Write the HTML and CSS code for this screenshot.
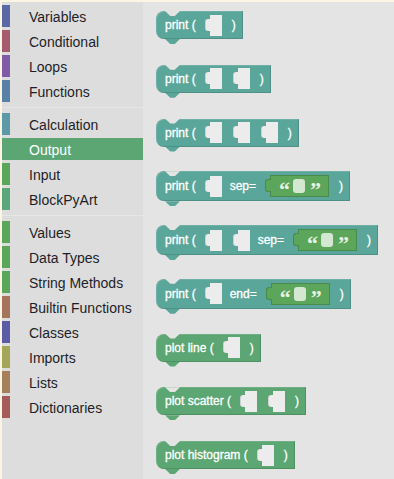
FILE: index.html
```html
<!DOCTYPE html>
<html lang="en">
<head>
  <meta charset="UTF-8" />
  <title>BlockPy - Output</title>
  <link rel="stylesheet" href="styles.css">
</head>
<body>

  <div class="frame">

    <div class="toolbox">
      <div class="row cat-variables">Variables</div>
      <div class="row cat-conditional">Conditional</div>
      <div class="row cat-loops">Loops</div>
      <div class="row cat-functions">Functions</div>
      <div class="separator"></div>
      <div class="row cat-calculation">Calculation</div>
      <div class="row cat-output selected">Output</div>
      <div class="row cat-input">Input</div>
      <div class="row cat-art">BlockPyArt</div>
      <div class="separator"></div>
      <div class="row cat-values">Values</div>
      <div class="row cat-values">Data Types</div>
      <div class="row cat-values">String Methods</div>
      <div class="row cat-builtin">Builtin Functions</div>
      <div class="row cat-classes">Classes</div>
      <div class="row cat-imports">Imports</div>
      <div class="row cat-lists">Lists</div>
      <div class="row cat-dicts">Dictionaries</div>
    </div>

    <div class="workspace">
      <div class="block print">
        <span>print (</span>
        <span class="hole"></span>
        <span class="close">)</span>
      </div>

      <div class="block print">
        <span>print (</span>
        <span class="hole"></span>
        <span class="hole"></span>
        <span class="close">)</span>
      </div>

      <div class="block print">
        <span>print (</span>
        <span class="hole"></span>
        <span class="hole"></span>
        <span class="hole"></span>
        <span class="close">)</span>
      </div>

      <div class="block print wide">
        <span>print (</span>
        <span class="hole"></span>
        <span>sep=</span>
        <span class="text-block"><span class="quote">&ldquo;</span><span class="field"></span><span class="quote">&rdquo;</span></span>
        <span class="close">)</span>
      </div>

      <div class="block print wide">
        <span>print (</span>
        <span class="hole"></span>
        <span class="hole"></span>
        <span>sep=</span>
        <span class="text-block"><span class="quote">&ldquo;</span><span class="field"></span><span class="quote">&rdquo;</span></span>
        <span class="close">)</span>
      </div>

      <div class="block print wide">
        <span>print (</span>
        <span class="hole"></span>
        <span>end=</span>
        <span class="text-block"><span class="quote">&ldquo;</span><span class="field"></span><span class="quote">&rdquo;</span></span>
        <span class="close">)</span>
      </div>

      <div class="block plot">
        <span>plot line (</span>
        <span class="hole"></span>
        <span class="close">)</span>
      </div>

      <div class="block plot">
        <span>plot scatter (</span>
        <span class="hole"></span>
        <span class="hole"></span>
        <span class="close">)</span>
      </div>

      <div class="block plot">
        <span>plot histogram (</span>
        <span class="hole"></span>
        <span class="close">)</span>
      </div>
    </div>

  </div>

</body>
</html>
```

FILE: styles.css
```css
body {
  margin: 0;
  background: #fcf5e3;
  font-family: "Liberation Sans", Arial, sans-serif;
}
.frame {
  display: flex;
  height: 477px;
  padding: 2px 0 0 2px;
  overflow: hidden;
}

/* Toolbox (categories) */
.toolbox {
  width: 141px;
  flex: none;
  background: #dddddd;
  padding-top: 3px;
}
.row {
  height: 22px;
  line-height: 24px;
  margin-bottom: 3px;
  padding-left: 19px;
  border-left: 8px solid #999;
  font-size: 14px;
  color: #1e1e28;
  white-space: nowrap;
  overflow: hidden;
}
.row.selected {
  color: white;
}
.separator {
  height: 0;
  border-bottom: 1px solid #e6e6e6;
  margin: 5px 0;
}
.cat-variables { border-color: #5b68a6; }
.cat-conditional { border-color: #a65b6e; }
.cat-loops { border-color: #805ba6; }
.cat-functions { border-color: #5b80a6; }
.cat-calculation { border-color: #5b9aa6; }
.cat-output { border-color: #5ba672; background: #5ba672; }
.cat-input { border-color: #5ba65b; }
.cat-art { border-color: #5ba67a; }
.cat-values { border-color: #5ba65b; }
.cat-builtin { border-color: #a6745b; }
.cat-classes { border-color: #5b5ba6; }
.cat-imports { border-color: #a6a65b; }
.cat-lists { border-color: #a6805b; }
.cat-dicts { border-color: #a65b5b; }

/* Workspace with blocks */
.workspace {
  flex: 1;
  background: #e4e4e4;
  padding: 9px 0 0 13px;
  display: flex;
  flex-direction: column;
  align-items: flex-start;
  gap: 25.75px;
}
.block {
  position: relative;
  display: flex;
  align-items: center;
  gap: 8px;
  height: 28px;
  padding: 0 7px 0 9px;
  border-radius: 8px 0 0 8px;
  color: white;
  font-size: 12px;
  -webkit-text-stroke: 0.3px white;
  white-space: nowrap;
  box-shadow: inset -1px -1px 0 rgba(0,0,0,0.13), inset 1px 1px 0 rgba(255,255,255,0.12);
}
.block.wide {
  height: 30px;
  margin: -1px 0;
}
.print { background: #5ba69a; }
.plot { background: #5ba672; }

/* notch on top, tab below */
.block::before,
.block::after {
  content: "";
  position: absolute;
  left: 9px;
  width: 15px;
  height: 5px;
  clip-path: polygon(0 0, 100% 0, 65% 100%, 35% 100%);
}
.block::before {
  top: 0;
  background: #e4e4e4;
}
.block::after {
  top: 100%;
  background: inherit;
}

.close {
  margin-left: 2px;
}

/* empty value input */
.hole {
  position: relative;
  width: 12px;
  height: 21px;
  margin-left: 6px;
  background: #ececec;
}
.hole + .hole {
  margin-left: 8px;
}
.hole::before {
  content: "";
  position: absolute;
  left: -5px;
  top: 4px;
  width: 5px;
  height: 12px;
  background: #ececec;
  border-radius: 3px 0 0 3px;
  box-shadow: inset 1px 0 0 rgba(0,0,0,0.12);
}

/* text block " " */
.text-block {
  position: relative;
  display: flex;
  align-items: center;
  height: 22px;
  margin-left: 6px;
  padding: 0 9px 0 8px;
  gap: 4px;
  background: #5ba65b;
  border: 1px solid #4a8a4a;
  box-sizing: border-box;
}
.text-block::before {
  content: "";
  position: absolute;
  left: -6px;
  top: 3px;
  width: 5px;
  height: 11px;
  background: #5ba65b;
  border: 1px solid #4a8a4a;
  border-right: none;
  border-radius: 3px 0 0 3px;
}
.quote {
  width: 9px;
  height: 10px;
  font: bold 22px "Liberation Serif", serif;
  line-height: 17px;
  color: #e8f2e6;
  text-align: center;
  -webkit-text-stroke: 0;
}
.field {
  width: 12px;
  height: 14px;
  margin: 0 1px;
  border-radius: 3px;
  background: #d3e7d1;
}
```
